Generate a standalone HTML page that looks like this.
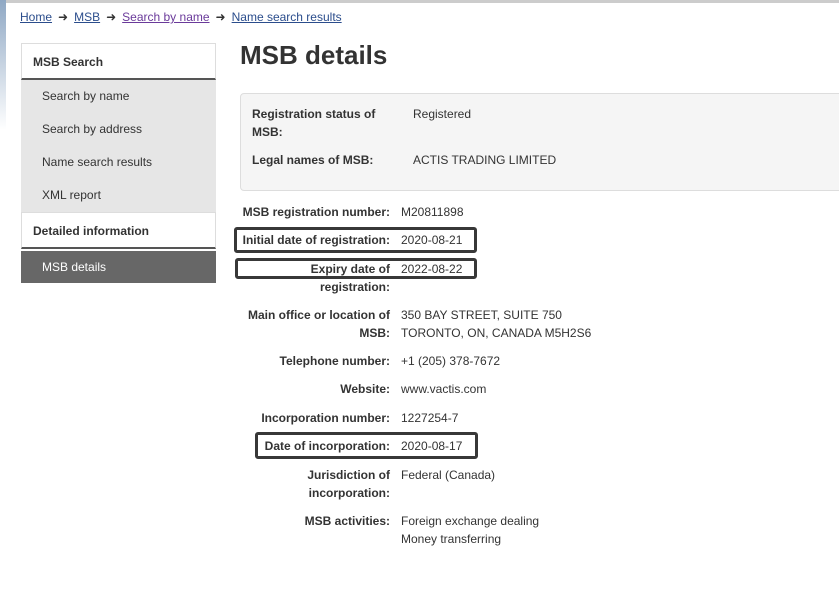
<!DOCTYPE html>
<html><head><meta charset="utf-8"><style>
body{margin:0;width:839px;height:600px;position:relative;overflow:hidden;background:#fff;font-family:"Liberation Sans",Arial,sans-serif;font-size:12px;color:#333}
.a{position:absolute;white-space:nowrap}
.bc a{color:#2b4d8c;text-decoration:underline}
.bc .v{color:#6a3a9a}
.bc span{display:inline-block;margin:0 6px}
.side{position:absolute;left:21px;top:43px;width:195px}
.h{background:#fff;border:1px solid #ddd;border-bottom:2px solid #555;height:37px;line-height:37px;padding-left:11px;font-weight:bold;font-size:12px;color:#333;box-sizing:border-box}
.it{background:#e6e6e6;height:33px;line-height:33px;padding-left:21px}
.act{background:#676767;color:#fff;height:32px;line-height:32px;padding-left:21px;margin-top:2px}
.l{position:absolute;right:449px;font-weight:bold;text-align:right;line-height:18px}
.v2{position:absolute;left:401px;line-height:18px}
.box{position:absolute;border:3px solid #383838;border-radius:3px;box-sizing:border-box}
</style></head><body>
<div class="a" style="left:0;top:0;width:839px;height:3px;background:#ccc"></div>
<div class="a" style="left:0;top:0;width:6px;height:130px;background:linear-gradient(#8fa8c4,#fff)"></div>
<div class="a bc" style="left:20px;top:10px;color:#333"><a>Home</a><span>➜</span><a>MSB</a><span>➜</span><a class="v">Search by name</a><span>➜</span><a>Name search results</a></div>
<div class="side">
<div class="h">MSB Search</div>
<div class="it">Search by name</div>
<div class="it">Search by address</div>
<div class="it">Name search results</div>
<div class="it">XML report</div>
<div class="h" style="height:37px;line-height:37px">Detailed information</div>
<div class="act">MSB details</div>
</div>
<div class="a" style="left:240px;top:40px;font-size:26px;font-weight:bold;color:#333">MSB details</div>
<div class="a" style="left:240px;top:93px;width:610px;height:98px;background:#f5f5f5;border:1px solid #ddd;border-radius:4px;box-sizing:border-box"></div>
<div class="a" style="left:252px;top:105px;font-weight:bold;line-height:18px">Registration status of<br>MSB:</div>
<div class="a" style="left:413px;top:105px;line-height:18px">Registered</div>
<div class="a" style="left:252px;top:151px;font-weight:bold;line-height:18px">Legal names of MSB:</div>
<div class="a" style="left:413px;top:151px;line-height:18px">ACTIS TRADING LIMITED</div>

<div class="l" style="top:203px">MSB registration number:</div><div class="v2" style="top:203px">M20811898</div>
<div class="l" style="top:231px">Initial date of registration:</div><div class="v2" style="top:231px">2020-08-21</div>
<div class="l" style="top:260px">Expiry date of<br>registration:</div><div class="v2" style="top:260px">2022-08-22</div>
<div class="l" style="top:306px">Main office or location of<br>MSB:</div><div class="v2" style="top:306px">350 BAY STREET, SUITE 750<br>TORONTO, ON, CANADA M5H2S6</div>
<div class="l" style="top:352px">Telephone number:</div><div class="v2" style="top:352px">+1 (205) 378-7672</div>
<div class="l" style="top:380px">Website:</div><div class="v2" style="top:380px">www.vactis.com</div>
<div class="l" style="top:409px">Incorporation number:</div><div class="v2" style="top:409px">1227254-7</div>
<div class="l" style="top:437px">Date of incorporation:</div><div class="v2" style="top:437px">2020-08-17</div>
<div class="l" style="top:466px">Jurisdiction of<br>incorporation:</div><div class="v2" style="top:466px">Federal (Canada)</div>
<div class="l" style="top:512px">MSB activities:</div><div class="v2" style="top:512px">Foreign exchange dealing<br>Money transferring</div>

<div class="box" style="left:234px;top:227px;width:243px;height:26px"></div>
<div class="box" style="left:235px;top:258px;width:242px;height:21px"></div>
<div class="box" style="left:255px;top:432px;width:223px;height:27px"></div>
</body></html>
